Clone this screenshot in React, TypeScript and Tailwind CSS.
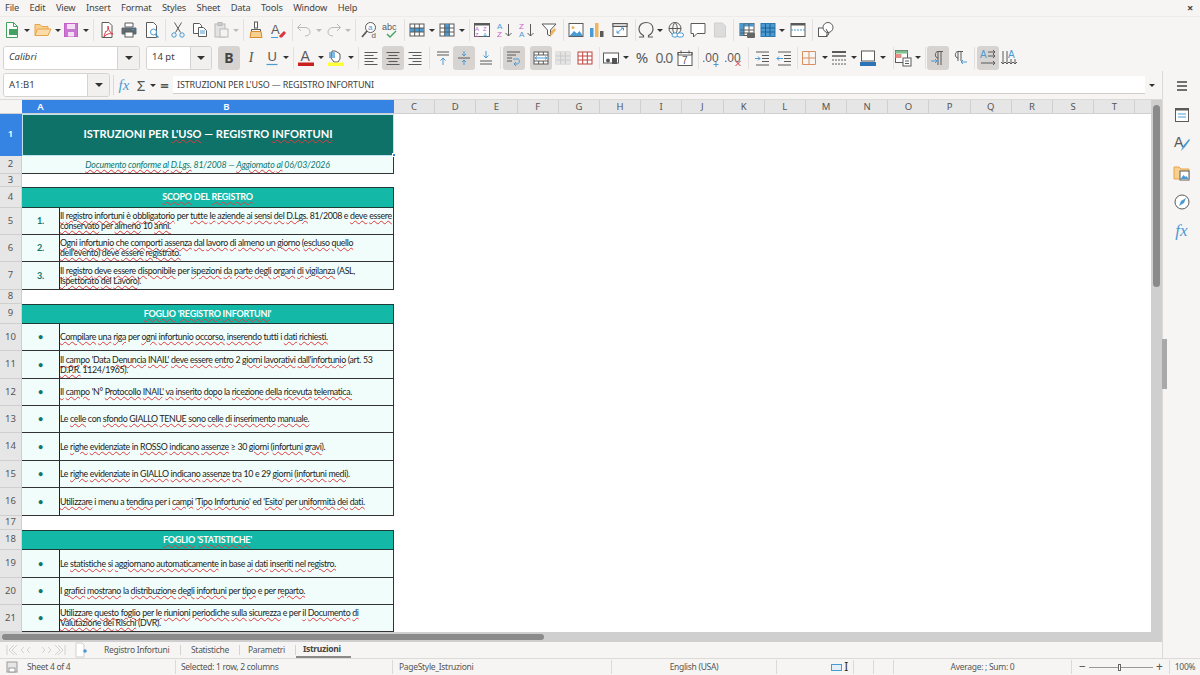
// LibreOffice Calc window, sheet Istruzioni
import type { ReactNode } from "react";

const BLUE = "#4a9bd4";
const GREY = "#5a5a5a";
const LIGHT = "#b9b9b9";
const PINK = "#c65fc9";
const RED = "#d8343a";

const S = ({ children }: { children: ReactNode }) => (
  <svg width="18" height="18" viewBox="0 0 18 18" fill="none" strokeWidth="1" className="shrink-0">
    {children}
  </svg>
);

const B = ({ c, hl, children }: { c: string; hl?: boolean; children?: ReactNode }) => (
  <div
    className={`${c} h-[24px] shrink-0 flex items-center justify-center rounded-[3px] ${hl ? "bg-[#d6d3d0]" : ""}`}
  >
    {children}
  </div>
);

const Arr = ({ c, light }: { c: string; light?: boolean }) => (
  <div className={`${c} h-[24px] shrink-0 flex items-center justify-center`}>
    <div
      className={`w-0 h-0 border-x-[3px] border-x-transparent border-t-[3px] ${light ? "border-t-[#bbbbbb]" : "border-t-[#333333]"}`}
    />
  </div>
);

const Sep = ({ c }: { c: string }) => (
  <div className={`${c} h-[22px] shrink-0 flex justify-center`}>
    <div className="w-px h-full bg-[#e3e1df]" />
  </div>
);

// griglia generica per le icone tabella
const Grid = ({ stroke = GREY, fill }: { stroke?: string; fill?: ReactNode }) => (
  <S>
    <rect x="2" y="3" width="14" height="12" fill="#fff" stroke={stroke} />
    {fill}
    <path d="M2 7h14M2 11h14M6.7 3v12M11.3 3v12" stroke={stroke} />
  </S>
);

const Lines = ({ d, extra }: { d: string; extra?: ReactNode }) => (
  <S>
    <path d={d} stroke={GREY} />
    {extra}
  </S>
);

const Letter = ({ x, y, s, size = 8, color = GREY, italic }: { x: number; y: number; s: string; size?: number; color?: string; italic?: boolean }) => (
  <text x={x} y={y} fontSize={size} fill={color} fontFamily="Liberation Sans, sans-serif" fontStyle={italic ? "italic" : "normal"}>
    {s}
  </text>
);

const IconsRow1 = () => (
  <div className="h-[27px] flex items-center pl-px pb-px">
    <B c="w-[22px]">
      <S>
        <path d="M3.5 1.5h7l4 4v11h-11z" fill="#fff" stroke="#43a260" />
        <rect x="6" y="8" width="9" height="6" fill="#43a260" />
        <path d="M10.5 1.5v4h4" stroke="#43a260" />
      </S>
    </B>
    <Arr c="w-[8px]" />
    <B c="w-[24px]">
      <S>
        <path d="M1 14.5v-11h5l2 2h6v9z" fill="#f7cf8e" stroke="#e9a44b" />
        <path d="M1 14.5l2.5-6.5H17l-3 6.5z" fill="#fbdca9" stroke="#e9a44b" />
      </S>
    </B>
    <Arr c="w-[5px]" />
    <B c="w-[22px]">
      <S>
        <rect x="2.5" y="2.5" width="13" height="13" fill="#c779cf" stroke={PINK} />
        <rect x="5" y="3" width="8" height="5" fill="#f3def5" />
        <rect x="6" y="11" width="6" height="4.5" fill="#f3def5" />
      </S>
    </B>
    <Arr c="w-[8px]" />
    <Sep c="w-[6px]" />
    <B c="w-[22px]">
      <S>
        <path d="M4 1.5h7l3 3v12H4z" fill="#fff" stroke={GREY} />
        <path d="M8 10c2 2 2-5 2-5s0 6 5 8c-3-1-7 0-9 3 0-1 1-4 2-6z" stroke={RED} />
      </S>
    </B>
    <B c="w-[22px]">
      <S>
        <path d="M5 2h8v4H5z" fill="#fff" stroke={GREY} />
        <path d="M2 7h14v6h-3v-2H5v2H2z" fill="#5f6a72" stroke="#5f6a72" />
        <rect x="5" y="11" width="8" height="5" fill="#fff" stroke={GREY} />
        <path d="M12 8.5h2" stroke={BLUE} />
      </S>
    </B>
    <B c="w-[24px]">
      <S>
        <path d="M3.5 1.5h7l3 3v12h-10z" fill="#fff" stroke={GREY} />
        <circle cx="10.5" cy="11" r="3" fill="#fff" stroke={BLUE} />
        <path d="M12.5 13.5l3 3" stroke={BLUE} strokeWidth="1.5" />
      </S>
    </B>
    <Sep c="w-[2px]" />
    <B c="w-[24px]">
      <S>
        <path d="M5.5 1.5l6 10M12.5 1.5l-6 10" stroke={GREY} />
        <circle cx="5" cy="14" r="2.2" stroke={BLUE} />
        <circle cx="13" cy="14" r="2.2" stroke={BLUE} />
      </S>
    </B>
    <B c="w-[20px]">
      <S>
        <path d="M2.5 2.5h6l2 2v8h-8z" fill="#fff" stroke={GREY} />
        <path d="M7.5 6.5h5l3 3v6h-8z" fill="#fff" stroke={GREY} />
        <path d="M9 10h5M9 12h5" stroke={BLUE} />
      </S>
    </B>
    <B c="w-[22px]">
      <S>
        <rect x="3" y="3" width="10" height="13" fill="#e3e3e3" stroke={LIGHT} />
        <rect x="6" y="1.5" width="4" height="3" fill="#ccc" stroke={LIGHT} />
        <rect x="8" y="8" width="8" height="8" fill="#f3f3f3" stroke={LIGHT} />
      </S>
    </B>
    <Arr c="w-[8px]" light />
    <Sep c="w-[6px]" />
    <B c="w-[20px]">
      <S>
        <rect x="7.5" y="1" width="3" height="6" fill="#fff" stroke={GREY} />
        <path d="M4.5 8.5h9v2h-9z" fill="#fff" stroke={GREY} />
        <path d="M4 10.5h10l1 6H3z" fill="#f7cf8e" stroke="#d98d2a" />
      </S>
    </B>
    <B c="w-[24px]">
      <S>
        <Letter x={2} y={13} s="A" size={13} color={GREY} />
        <path d="M10 15l5-5 2 2-4 4.500h-2z" fill={RED} />
        <path d="M2 16.500h7" stroke={BLUE} />
      </S>
    </B>
    <Sep c="w-[4px]" />
    <B c="w-[20px]">
      <S>
        <path d="M6 3L2.500 6.500 6 10M3 6.500h7c3 0 5 2 5 4.500s-2 4-5 4" stroke={LIGHT} />
      </S>
    </B>
    <Arr c="w-[10px]" light />
    <B c="w-[20px]">
      <S>
        <path d="M12 3l3.500 3.500L12 10M15 6.500H8c-3 0-5 2-5 4.500s2 4 5 4" stroke={LIGHT} />
      </S>
    </B>
    <Arr c="w-[8px]" light />
    <Sep c="w-[6px]" />
    <B c="w-[22px]">
      <S>
        <circle cx="10.500" cy="6.500" r="5" fill="#fff" stroke={GREY} />
        <path d="M7 10l-5 6" stroke={GREY} strokeWidth="1.800" />
        <Letter x={8} y={9} s="a" size={8} color={BLUE} />
        <Letter x={11.500} y={17} s="d" size={8} color={GREY} />
      </S>
    </B>
    <B c="w-[22px]">
      <S>
        <Letter x={0} y={9} s="abc" size={9} color={GREY} />
        <path d="M5 13l3 3 6-6" stroke="#43a260" strokeWidth="1.400" />
      </S>
    </B>
    <Sep c="w-[4px]" />
    <B c="w-[22px]">
      <Grid fill={<rect x="2" y="7" width="14" height="4" fill={BLUE} />} />
    </B>
    <Arr c="w-[8px]" />
    <B c="w-[22px]">
      <Grid fill={<rect x="6.700" y="3" width="4.600" height="12" fill={BLUE} />} />
    </B>
    <Arr c="w-[8px]" />
    <Sep c="w-[6px]" />
    <B c="w-[20px]">
      <S>
        <rect x="1.500" y="2.500" width="15" height="13" fill="#fff" stroke={GREY} />
        <rect x="1.500" y="2.500" width="15" height="2" fill={GREY} />
        <Letter x={2} y={10} s="A" size={6} color={PINK} />
        <Letter x={10} y={10} s="Z" size={6} color={PINK} />
        <Letter x={2} y={15.500} s="Z" size={6} color={PINK} />
        <Letter x={10} y={15.500} s="A" size={6} color={BLUE} />
      </S>
    </B>
    <B c="w-[26px]">
      <S>
        <Letter x={1} y={8} s="A" size={8} color={BLUE} />
        <Letter x={1} y={16} s="Z" size={8} color={PINK} />
        <path d="M12.500 3v12M9.500 12l3 3 3-3" stroke={GREY} />
      </S>
    </B>
    <B c="w-[18px]">
      <S>
        <Letter x={1} y={8} s="Z" size={8} color={PINK} />
        <Letter x={1} y={16} s="A" size={8} color={BLUE} />
        <path d="M12.500 3v12M9.500 12l3 3 3-3" stroke={GREY} />
      </S>
    </B>
    <B c="w-[26px]">
      <S>
        <path d="M2 3h14l-5.500 6v6l-3-1.500V9z" fill="#fff" stroke={GREY} />
        <path d="M11 10l4-3 1 2-4 5-2 1z" fill="#f1b45f" />
      </S>
    </B>
    <Sep c="w-[2px]" />
    <B c="w-[24px]">
      <S>
        <rect x="2" y="2.500" width="14" height="13" fill="#fff" stroke={GREY} />
        <circle cx="6" cy="6.500" r="1.500" fill="#f1b45f" />
        <path d="M2.500 15l4.500-5 3 2.500 2.500-2.500 3.500 5z" fill={BLUE} />
      </S>
    </B>
    <B c="w-[18px]">
      <S>
        <rect x="2" y="7" width="3.500" height="9" fill={BLUE} />
        <rect x="7" y="2" width="3.500" height="14" fill="#f1b45f" />
        <rect x="12" y="10" width="3.500" height="6" fill={GREY} />
      </S>
    </B>
    <B c="w-[28px]">
      <S>
        <rect x="2" y="2.500" width="14" height="13" fill="#fff" stroke={GREY} />
        <rect x="2" y="2.500" width="14" height="3" fill="#d5d5d5" stroke={GREY} />
        <path d="M6 12l6-5M10 7h2.500v2.500M6 9.500V12h2.500" stroke={BLUE} />
      </S>
    </B>
    <Sep c="w-[2px]" />
    <B c="w-[20px]">
      <S>
        <path d="M2 16h4.500v-1.500C3.500 13 2 11 2 8c0-4 3-6.500 7-6.500S16 4 16 8c0 3-1.500 5-4.500 6.500V16H16" stroke={GREY} strokeWidth="1.200" />
      </S>
    </B>
    <Arr c="w-[8px]" />
    <B c="w-[24px]">
      <S>
        <circle cx="8" cy="7.500" r="6" stroke={GREY} />
        <path d="M2 7.500h12M8 1.500c-3 3-3 9 0 12M8 1.500c3 3 3 9 0 12" stroke={GREY} />
        <rect x="5" y="12" width="6" height="4" rx="2" fill="#fff" stroke={BLUE} />
        <rect x="10" y="12" width="6.500" height="4" rx="2" fill="#fff" stroke={BLUE} />
      </S>
    </B>
    <B c="w-[20px]">
      <S>
        <path d="M2 2.500h14v10H8l-3.500 3.500v-3.500H2z" fill="#fff" stroke={GREY} />
      </S>
    </B>
    <B c="w-[24px]">
      <S>
        <path d="M3.500 2h8l3 3v11h-11z" fill="#dcdcdc" stroke="#cfcfcf" />
      </S>
    </B>
    <Sep c="w-[2px]" />
    <B c="w-[26px]">
      <S>
        <rect x="2" y="2.500" width="14" height="12" fill="#fff" stroke={GREY} />
        <rect x="2" y="2.500" width="14" height="3" fill={BLUE} />
        <rect x="2" y="2.500" width="4" height="12" fill={BLUE} />
        <path d="M2 9h14M2 12h14M6 3v12M11 3v12" stroke={GREY} />
        <rect x="9" y="12" width="8" height="5" rx="1" fill="#666" />
      </S>
    </B>
    <B c="w-[16px]">
      <S>
        <rect x="2" y="2.500" width="14" height="13" fill={BLUE} stroke="#2f78ad" />
        <path d="M2 7h14M2 11h14M6.500 3v12M11 3v12" stroke="#1f5f8f" />
      </S>
    </B>
    <Arr c="w-[12px]" />
    <B c="w-[20px]">
      <S>
        <rect x="2" y="2.500" width="14" height="13" fill="#fff" stroke={GREY} />
        <rect x="2" y="2.500" width="14" height="2" fill={GREY} />
        <path d="M2 9h14" stroke={BLUE} strokeDasharray="2 1" />
      </S>
    </B>
    <Sep c="w-[8px]" />
    <B c="w-[20px]">
      <S>
        <rect x="1.500" y="7" width="8.500" height="8.500" fill="#fff" stroke={GREY} />
        <circle cx="11" cy="6.500" r="5" fill="#fff" stroke={GREY} />
        <path d="M9 8l3 5-3 2" stroke={GREY} />
      </S>
    </B>
  </div>
);

const Combo = ({ box, input, italic, text }: { box: string; input: string; italic?: boolean; text: string }) => (
  <div className={`${box} h-[24px] shrink-0 flex rounded-[3px] border border-[#d5d3d0] bg-[#f6f5f4] overflow-hidden`}>
    <div className={`${input} bg-white flex items-center pl-[5px] text-[9.500px] text-[#3d3d3d] ${italic ? "italic" : ""}`}>
      {text}
    </div>
    <div className="flex-1 flex items-center justify-center border-l border-[#d5d3d0] bg-[#f1f0ee]">
      <div className="w-0 h-0 border-x-[4px] border-x-transparent border-t-[4px] border-t-[#333333]" />
    </div>
  </div>
);

const IconsRow2 = () => (
  <div className="h-[27px] flex items-center pl-[3px]">
    <Combo box="w-[137px]" input="w-[113px]" italic text="Calibri" />
    <Combo box="w-[66px] ml-[6px]" input="w-[43px]" text="14 pt" />
    <B c="w-[22px] ml-[6px]" hl>
      <span className="text-[14px] font-bold text-[#444444]">B</span>
    </B>
    <B c="w-[22px]">
      <span className="text-[14px] italic text-[#555555] font-['Liberation_Serif',serif]">I</span>
    </B>
    <B c="w-[20px]">
      <S>
        <Letter x={4.500} y={12} s="U" size={13} color={GREY} />
        <path d="M3.500 15.500h11" stroke={BLUE} strokeWidth="1.200" />
      </S>
    </B>
    <Arr c="w-[8px]" />
    <Sep c="w-[6px]" />
    <B c="w-[20px]">
      <S>
        <Letter x={3.500} y={12} s="A" size={14} color={GREY} />
        <rect x="1" y="13.500" width="16" height="3.500" fill="#c9211e" />
      </S>
    </B>
    <Arr c="w-[10px]" />
    <B c="w-[20px]">
      <S>
        <path d="M5 2h3l2 1 3 2v5l-2 3H7l-3-4z" fill="#fff" stroke={GREY} />
        <rect x="2" y="3" width="6" height="6" fill={BLUE} opacity=".7" />
        <rect x="1" y="13.500" width="16" height="3.500" fill="#ffff38" />
      </S>
    </B>
    <Arr c="w-[10px]" />
    <Sep c="w-[4px]" />
    <B c="w-[22px]">
      <Lines d="M2.500 3.500h13M2.500 6.500h9M2.500 9.500h13M2.500 12.500h9M2.500 15.500h13" />
    </B>
    <B c="w-[22px]" hl>
      <Lines d="M2.500 3.500h13M4.500 6.500h9M2.500 9.500h13M4.500 12.500h9M2.500 15.500h13" />
    </B>
    <B c="w-[22px]">
      <Lines d="M2.500 3.500h13M6.500 6.500h9M2.500 9.500h13M6.500 12.500h9M2.500 15.500h13" />
    </B>
    <Sep c="w-[6px]" />
    <B c="w-[21px]">
      <Lines d="M3 3h12M3 6h12" extra={<path d="M9 16V9M6.500 11.500L9 9l2.500 2.500" stroke={BLUE} />} />
    </B>
    <B c="w-[22px]" hl>
      <Lines d="M3 9h12" extra={<path d="M9 2v5M7 5l2 2 2-2M9 16v-5M7 13l2-2 2 2" stroke={BLUE} />} />
    </B>
    <B c="w-[22px]">
      <Lines d="M3 12h12M3 15h12" extra={<path d="M9 2v7M6.500 6.500L9 9l2.500-2.500" stroke={BLUE} />} />
    </B>
    <Sep c="w-[6px]" />
    <B c="w-[22px]" hl>
      <Lines d="M2 3h13M2 6h9M2 9h5M2 12h5" extra={<path d="M8 10h5c2 0 2 5-1 5H9M11 13l-2 2 2 2" stroke={BLUE} />} />
    </B>
    <B c="w-[22px] ml-[5px]" hl>
      <S>
        <rect x="2" y="3" width="14" height="12" fill="#fff" stroke={GREY} />
        <path d="M2 6h14M2 12h14M6.700 3v3M11.300 3v3M6.700 12v3M11.300 12v3" stroke={GREY} />
        <path d="M3 9h12M3 9l2-1.500M3 9l2 1.500M15 9l-2-1.500M15 9l-2 1.500" stroke={BLUE} />
      </S>
    </B>
    <B c="w-[22px]">
      <Grid stroke="#c9c9c9" fill={<rect x="2" y="3" width="14" height="12" fill="#e4e4e4" />} />
    </B>
    <B c="w-[22px]">
      <Grid stroke="#c0443f" />
    </B>
    <Sep c="w-[6px]" />
    <B c="w-[18px]">
      <S>
        <rect x="1.500" y="4" width="15" height="10" fill="#fff" stroke={GREY} />
        <circle cx="6" cy="11.500" r="2" fill="#555" />
        <rect x="10" y="9" width="5" height="6" fill="#555" />
      </S>
    </B>
    <Arr c="w-[12px]" />
    <B c="w-[20px]">
      <span className="text-[15px] text-[#555555]">%</span>
    </B>
    <B c="w-[24px]">
      <span className="text-[14px] text-[#666666] tracking-[-1px]">0.0</span>
    </B>
    <B c="w-[18px]">
      <S>
        <rect x="2" y="3.500" width="14" height="13" fill="#fff" stroke={GREY} />
        <path d="M2 3.500h14v2.500H2zM5 1.500v3M13 1.500v3" stroke={GREY} />
        <Letter x={6} y={15} s="7" size={10} color={GREY} />
      </S>
    </B>
    <Sep c="w-[8px]" />
    <B c="w-[20px]">
      <S>
        <Letter x={-1} y={13} s=".00" size={12} color={GREY} />
        <path d="M13 13v5M10.500 15.500h5" stroke={BLUE} />
      </S>
    </B>
    <B c="w-[24px]">
      <S>
        <Letter x={-1} y={13} s=".00" size={12} color={GREY} />
        <path d="M10.500 12l5 5M15.500 12l-5 5" stroke={RED} />
      </S>
    </B>
    <Sep c="w-[4px]" />
    <B c="w-[24px]">
      <Lines d="M3 3h13M9 6.500h7M9 9.500h7M9 12.500h7M3 16h13" extra={<path d="M2 9.500h5M5 7.500l2 2-2 2" stroke={BLUE} />} />
    </B>
    <B c="w-[20px]">
      <Lines d="M3 3h13M9 6.500h7M9 9.500h7M9 12.500h7M3 16h13" extra={<path d="M8 9.500H2M4 7.500l-2 2 2 2" stroke={BLUE} />} />
    </B>
    <Sep c="w-[6px]" />
    <B c="w-[18px]">
      <S>
        <path d="M2.500 2.500h13v13h-13zM9 2.500v13M2.500 9h13" stroke="#d98f5f" />
      </S>
    </B>
    <Arr c="w-[14px]" />
    <B c="w-[14px]">
      <S>
        <path d="M2 3h14" stroke={GREY} strokeWidth="2" />
        <path d="M2 7h14" stroke={GREY} strokeWidth="1.500" />
        <path d="M2 11h14M2 15h14" stroke={GREY} strokeDasharray="2 1" />
      </S>
    </B>
    <Arr c="w-[16px]" />
    <B c="w-[12px]">
      <S>
        <rect x="2.500" y="2" width="13" height="10" fill="#fff" stroke={GREY} />
        <rect x="1" y="13" width="16" height="4" fill="#2b74b8" />
      </S>
    </B>
    <Arr c="w-[18px]" />
    <Sep c="w-[2px]" />
    <B c="w-[18px]">
      <S>
        <rect x="1.500" y="1.500" width="12" height="12" fill="#fff" stroke={GREY} />
        <rect x="1.500" y="1.500" width="12" height="3" fill="#7cc08f" />
        <rect x="1.500" y="5" width="6" height="4" fill="#e88c84" />
        <rect x="9" y="9" width="8" height="8" fill="#fff" stroke={GREY} />
        <path d="M11 12h4M11 14.500h4" stroke={GREY} />
      </S>
    </B>
    <Arr c="w-[12px]" />
    <Sep c="w-[3px]" />
    <B c="w-[22px]" hl>
      <Lines d="M9 16V2.500h5M12 2.500V16M9 2.500C5.500 2.500 5.500 9 9 9" extra={<path d="M2 12h6M6 10l2 2-2 2" stroke={BLUE} />} />
    </B>
    <B c="w-[22px]">
      <Lines d="M7 12V2.500h5M10 2.500V12M7 2.500C3.500 2.500 3.500 9 7 9" extra={<path d="M16 13h-6M12 11l-2 2 2 2" stroke={BLUE} />} />
    </B>
    <Sep c="w-[6px]" />
    <B c="w-[22px]" hl>
      <S>
        <Letter x={1} y={9} s="A" size={10} color={BLUE} />
        <path d="M9 3h7M14 1l2 2-2 2M9 7h7M14 5l2 2-2 2M2 14h14M14 12l2 2-2 2" stroke={GREY} />
      </S>
    </B>
    <B c="w-[20px]">
      <S>
        <Letter x={8} y={9} s="A" size={10} color={BLUE} />
        <path d="M3 2v13M1 13l2 2 2-2M7 2v13M5 13l2 2 2-2M11 10v5M9 13l2 2 2-2M15 10v5M13 13l2 2 2-2" stroke={GREY} />
      </S>
    </B>
  </div>
);

const FormulaBar = () => (
  <div className="h-[29px] flex items-center pl-[3px] border-b border-[#dcdad7]">
    <Combo box="w-[107px]" input="w-[83px]" text="A1:B1" />
    <div className="w-px h-[20px] bg-[#dcdad7] ml-[3px]" />
    <div className="w-[20px] text-center text-[15px] italic text-[#4a9bd4] font-['Liberation_Serif',serif]">fx</div>
    <div className="w-[14px] text-center text-[15px] text-[#555555]">Σ</div>
    <Arr c="w-[9px]" />
    <div className="w-[15px] text-center text-[15px] font-bold text-[#555555]">=</div>
    <div className="w-[972px] ml-px h-[18px] bg-white border-b border-[#cfcdca] flex items-center pl-[4px] text-[9px] tracking-[-0.15px] text-[#3d3d3d] whitespace-nowrap">
      ISTRUZIONI PER L'USO — REGISTRO INFORTUNI
    </div>
    <Arr c="w-[14px]" />
  </div>
);

const letters = ["C", "D", "E", "F", "G", "H", "I", "J", "K", "L", "M", "N", "O", "P", "Q", "R", "S", "T"];

const ColHeaders = () => (
  <div className="h-[14px] flex text-[9.500px] leading-[13px] text-[#555555] bg-[#e6e6e6] border-b border-[#d0d0d0]">
    <div className="w-[22px] shrink-0 bg-[#f6f5f4]" />
    <div className="w-[37px] shrink-0 bg-[#3584e4] text-white font-semibold text-center">A</div>
    <div className="w-[335px] shrink-0 bg-[#3584e4] text-white font-semibold text-center">B</div>
    {letters.map((l) => (
      <div key={l} className="w-[41.200px] shrink-0 text-center border-r border-[#cfcfcf]">
        {l}
      </div>
    ))}
  </div>
);

// ~parola~ = parola con sottolineatura rossa del correttore
const Spell = ({ text }: { text: string }) => (
  <>
    {text.split("~").map((part, i) =>
      i % 2 ? (
        <span key={i} className="underline decoration-wavy decoration-[#e0393e] decoration-1 underline-offset-[1px]">
          {part}
        </span>
      ) : (
        part
      ),
    )}
  </>
);

const RowHead = ({ n, h, active }: { n: number; h: string; active?: boolean }) => (
  <div
    className={`w-[22px] shrink-0 ${h} flex items-center justify-center text-[9.500px] border-b border-r ${
      active ? "bg-[#3584e4] text-white font-semibold border-[#3584e4]" : "bg-[#e6e6e6] text-[#555555] border-[#cfcfcf]"
    }`}
  >
    {n}
  </div>
);

const BodyRow = ({ n, h, mark, bullet, text }: { n: number; h: string; mark: string; bullet?: boolean; text: string }) => (
  <div className="flex">
    <RowHead n={n} h={h} />
    <div className={`w-[372px] shrink-0 ${h} flex bg-[#f0fdfa] border-b border-r border-[#333333] font-['Lato',sans-serif]`}>
      <div className={`w-[38px] shrink-0 flex items-center justify-center border-r border-[#222222] text-[#0f766e] font-bold text-[9px] ${bullet ? "" : "tracking-[-0.2px]"}`}>
        {mark}
      </div>
      <div className="flex-1 flex items-center text-[8.800px] tracking-[-0.34px] leading-[10px] text-[#222222] whitespace-pre overflow-hidden">
        <div>
          <Spell text={text} />
        </div>
      </div>
    </div>
  </div>
);

const SectionRow = ({ n, h, text }: { n: number; h: string; text: string }) => (
  <div className="flex">
    <RowHead n={n} h={h} />
    <div className={`w-[372px] shrink-0 ${h} flex items-center justify-center pb-px bg-[#14b8a6] border-y border-r border-[#1f3b38] text-white font-bold text-[9px] tracking-[-0.25px] font-['Lato',sans-serif]`}>
      <span>
        <Spell text={text} />
      </span>
    </div>
  </div>
);

const EmptyRow = ({ n, h }: { n: number; h: string }) => (
  <div className="flex">
    <RowHead n={n} h={h} />
  </div>
);

const Sheet = () => (
  <div className="h-[518px] overflow-hidden bg-white">
    <div className="flex relative">
      <RowHead n={1} h="h-[42px]" active />
      <div className="w-[372px] shrink-0 h-[42px] flex items-center justify-center pb-[2px] bg-[#0f7268] border border-[#bfe3ef] text-white font-bold text-[11.100px] font-['Lato',sans-serif]">
        <span>
          <Spell text="ISTRUZIONI PER ~L'USO~ — REGISTRO ~INFORTUNI~" />
        </span>
      </div>
      <div className="absolute left-[392px] top-[39px] w-[4px] h-[4px] bg-[#3584e4] border border-white" />
    </div>
    <div className="flex">
      <RowHead n={2} h="h-[18px]" />
      <div className="w-[372px] shrink-0 h-[18px] flex items-center justify-center bg-[#f0fdfa] border-b border-r border-[#333333] italic text-[#0f766e] text-[8.800px] tracking-[-0.2px] font-['Lato',sans-serif]">
        <span>
          <Spell text="~Documento~ ~conforme~ ~al~ ~D.Lgs.~ 81/2008 — ~Aggiornato~ ~al~ 06/03/2026" />
        </span>
      </div>
    </div>
    <EmptyRow n={3} h="h-[13px]" />
    <SectionRow n={4} h="h-[21px]" text="~SCOPO~ DEL ~REGISTRO~" />
    <BodyRow n={5} h="h-[27px]" mark="1." text={"~Il~ ~registro~ ~infortuni~ è ~obbligatorio~ per ~tutte~ ~le~ ~aziende~ ~ai~ ~sensi~ ~del~ ~D.Lgs.~ 81/2008 e ~deve~ ~essere~\n~conservato~ per ~almeno~ 10 ~anni.~"} />
    <BodyRow n={6} h="h-[27px]" mark="2." text={"~Ogni~ ~infortunio~ ~che~ ~comporti~ ~assenza~ ~dal~ ~lavoro~ ~di~ ~almeno~ ~un~ ~giorno~ (~escluso~ ~quello~\n~dell'evento~) ~deve~ ~essere~ ~registrato.~"} />
    <BodyRow n={7} h="h-[28px]" mark="3." text={"~Il~ ~registro~ ~deve~ ~essere~ ~disponibile~ per ~ispezioni~ ~da~ ~parte~ ~degli~ ~organi~ ~di~ ~vigilanza~ (ASL,\n~Ispettorato~ ~del~ ~Lavoro~)."} />
    <EmptyRow n={8} h="h-[14px]" />
    <SectionRow n={9} h="h-[20px]" text="~FOGLIO~ '~REGISTRO~ ~INFORTUNI~'" />
    <BodyRow n={10} h="h-[27px]" mark="•" bullet text="~Compilare~ ~una~ ~riga~ per ~ogni~ ~infortunio~ ~occorso,~ ~inserendo~ tutti i ~dati~ ~richiesti.~" />
    <BodyRow n={11} h="h-[28px]" mark="•" bullet text={"~Il~ ~campo~ 'Data ~Denuncia~ ~INAIL~' ~deve~ ~essere~ ~entro~ 2 ~giorni~ ~lavorativi~ ~dall'infortunio~ (art. 53\n~D.P.R.~ 1124/1965)."} />
    <BodyRow n={12} h="h-[27px]" mark="•" bullet text="~Il~ ~campo~ 'N° ~Protocollo~ ~INAIL~' ~va~ ~inserito~ ~dopo~ la ~ricezione~ ~della~ ~ricevuta~ ~telematica.~" />
    <BodyRow n={13} h="h-[27px]" mark="•" bullet text="Le ~celle~ con ~sfondo~ ~GIALLO~ ~TENUE~ ~sono~ ~celle~ ~di~ ~inserimento~ ~manuale.~" />
    <BodyRow n={14} h="h-[28px]" mark="•" bullet text="Le ~righe~ ~evidenziate~ in ~ROSSO~ ~indicano~ ~assenze~ ≥ 30 ~giorni~ (~infortuni~ ~gravi~)." />
    <BodyRow n={15} h="h-[27px]" mark="•" bullet text="Le ~righe~ ~evidenziate~ in ~GIALLO~ ~indicano~ ~assenze~ ~tra~ 10 e 29 ~giorni~ (~infortuni~ ~medi~)." />
    <BodyRow n={16} h="h-[28px]" mark="•" bullet text="~Utilizzare~ i menu a ~tendina~ per i ~campi~ '~Tipo~ ~Infortunio~' ed '~Esito~' per ~uniformità~ ~dei~ ~dati.~" />
    <EmptyRow n={17} h="h-[14px]" />
    <SectionRow n={18} h="h-[20px]" text="~FOGLIO~ '~STATISTICHE~'" />
    <BodyRow n={19} h="h-[28px]" mark="•" bullet text="Le ~statistiche~ ~si~ ~aggiornano~ ~automaticamente~ in base ~ai~ ~dati~ ~inseriti~ ~nel~ ~registro.~" />
    <BodyRow n={20} h="h-[27px]" mark="•" bullet text="I ~grafici~ ~mostrano~ la ~distribuzione~ ~degli~ ~infortuni~ per ~tipo~ e per ~reparto.~" />
    <BodyRow n={21} h="h-[27px]" mark="•" bullet text={"~Utilizzare~ ~questo~ ~foglio~ per ~le~ ~riunioni~ ~periodiche~ ~sulla~ ~sicurezza~ e per ~il~ ~Documento~ ~di~\n~Valutazione~ ~dei~ ~Rischi~ (DVR)."} />
  </div>
);

const SideIcons = () => (
  <div className="w-[38px] shrink-0 flex flex-col items-center border-l border-[#dcdad7] relative">
    <div className="h-[29px] flex items-center">
      <svg width="14" height="14" viewBox="0 0 14 14">
        <path d="M2 3h10M2 7h10M2 11h10" stroke="#444" strokeWidth="1.500" />
      </svg>
    </div>
    <div className="mt-[6px] flex flex-col items-center gap-[11px]">
      <S>
        <rect x="2.500" y="2.500" width="13" height="13" fill="#fff" stroke={GREY} />
        <rect x="2.500" y="2.500" width="13" height="2" fill={GREY} />
        <path d="M5 8h8M5 11h8" stroke={BLUE} />
      </S>
      <S>
        <Letter x={1} y={12} s="A" size={14} color={GREY} />
        <path d="M8 16l2-5 6-7 1 1-5 7z" fill={BLUE} />
      </S>
      <S>
        <path d="M1 15V3h5l2 2h8v10z" fill="#f7cf8e" stroke="#e9a44b" />
        <rect x="7" y="7" width="9" height="9" fill="#fff" stroke={GREY} />
        <path d="M7.500 15l3-4 2 2 1-1 2 3z" fill={BLUE} />
      </S>
      <S>
        <circle cx="9" cy="9" r="7" fill="#fff" stroke={GREY} />
        <path d="M13 5l-2 5-5 3 2-5z" fill={BLUE} />
      </S>
      <div className="text-[17px] leading-[18px] italic text-[#4a9bd4] font-['Liberation_Serif',serif]">fx</div>
    </div>
    <div className="absolute -left-px top-[268px] w-[5px] h-[50px] bg-[#a9a9a9]" />
  </div>
);

const TabBar = () => (
  <div className="h-[16px] flex items-center text-[8.500px] tracking-[-0.3px] text-[#555555] whitespace-nowrap">
    <div className="w-[68px] pl-[6px] flex items-center">
      <svg width="60" height="12" viewBox="0 0 60 12" fill="none" stroke="#d2d2d2">
        <path d="M1 1v10M8 1L3 6l5 5M11 1L6 6l5 5M18 3l-3 3 3 3M24 3l-3 3 3 3M36 3l3 3-3 3M42 3l3 3-3 3M49 1l5 5-5 5M52 1l5 5-5 5M59 1v10" />
      </svg>
    </div>
    <div className="w-[30px] pl-[7px] flex items-center">
      <svg width="14" height="16" viewBox="0 0 14 16">
        <path d="M1 1h6l2 2v12H1z" fill="#fff" stroke="#cfcfcf" />
        <circle cx="10" cy="9" r="1.800" fill="#4a9bd4" />
      </svg>
    </div>
    <div className="w-[82px] pl-[6px]">Registro Infortuni</div>
    <div className="w-px h-[10px] bg-[#d5d3d0]" />
    <div className="w-[58px] pl-[10px]">Statistiche</div>
    <div className="w-px h-[10px] bg-[#d5d3d0]" />
    <div className="w-[55px] pl-[8px]">Parametri</div>
    <div className="w-px h-[10px] bg-[#d5d3d0]" />
    <div className="w-[55px] h-[16px] pl-[7px] flex items-center font-bold text-[#444444] border-b-2 border-[#8a8a8a]">Istruzioni</div>
  </div>
);

const StatusSep = () => <div className="w-px h-[14px] shrink-0 bg-[#dcdad7]" />;

const StatusBar = () => (
  <div className="h-[17px] flex items-center border-t border-[#dcdad7] text-[8.500px] tracking-[-0.3px] text-[#555555] whitespace-nowrap">
    <div className="w-[27px] shrink-0 pl-[6px]">
      <svg width="12" height="12" viewBox="0 0 12 12">
        <rect x="1" y="1" width="10" height="10" fill="#e6e6e6" stroke="#999" />
        <rect x="3" y="7" width="6" height="4" fill="#fff" stroke="#999" />
      </svg>
    </div>
    <div className="w-[148px] shrink-0">Sheet 4 of 4</div>
    <StatusSep />
    <div className="w-[216px] shrink-0 pl-[5px]">Selected: 1 row, 2 columns</div>
    <StatusSep />
    <div className="w-[218px] shrink-0 pl-[6px]">PageStyle_Istruzioni</div>
    <StatusSep />
    <div className="w-[164px] shrink-0 text-center">English (USA)</div>
    <StatusSep />
    <div className="w-[76px] shrink-0 flex items-center justify-end gap-[2px] pr-[5px]">
      <div className="w-[11px] h-[7px] border border-[#4a9bd4] bg-[#e3f0f9]" />
      <div className="text-[12px] leading-[12px] text-[#333333]">I</div>
    </div>
    <StatusSep />
    <div className="w-[19px] shrink-0" />
    <StatusSep />
    <div className="w-[19px] shrink-0" />
    <StatusSep />
    <div className="w-[177px] shrink-0 text-center">Average: ; Sum: 0</div>
    <StatusSep />
    <div className="w-[97px] shrink-0 flex items-center pl-[7px]">
      <span className="text-[12px] leading-[12px] w-[10px]">−</span>
      <div className="w-[64px] h-px bg-[#999999] relative">
        <div className="absolute left-[29px] -top-[3px] w-[3px] h-[7px] border border-[#666666] bg-white" />
      </div>
      <span className="text-[12px] leading-[12px] ml-[3px]">+</span>
    </div>
    <StatusSep />
    <div className="flex-1 text-center">100%</div>
  </div>
);

export default function App() {
  return (
    <div className="w-[1200px] h-[675px] overflow-hidden flex flex-col bg-[#f6f5f4] text-[#3d3d3d] font-['Noto_Sans',sans-serif]">
      {/* menu */}
      <div className="h-[17px] shrink-0 flex items-center text-[9.300px] tracking-[-0.2px] text-[#444444] border-b border-[#ecebe9]">
        <div className="flex gap-[10.500px] pl-[5px] -mt-px">
          {["File", "Edit", "View", "Insert", "Format", "Styles", "Sheet", "Data", "Tools", "Window", "Help"].map((m) => (
            <span key={m}>{m}</span>
          ))}
        </div>
        <span className="ml-auto mr-[7px] text-[11px] font-bold">×</span>
      </div>
      <IconsRow1 />
      <IconsRow2 />
      <div className="flex flex-1 min-h-0">
        <div className="w-[1162px] shrink-0 flex flex-col min-w-0">
          <FormulaBar />
          <div className="flex">
            <div className="w-[1151px] shrink-0 overflow-hidden">
              <ColHeaders />
              <Sheet />
            </div>
            <div className="w-[11px] shrink-0 bg-[#cfcfcf] pt-[5px] px-[2px]">
              <div className="h-[182px] rounded-full bg-[#8a8a8a]" />
            </div>
          </div>
          <div className="h-[10px] bg-[#cfcfcf] flex items-center pl-[2px]">
            <div className="w-[542px] h-[6px] rounded-full bg-[#8a8a8a]" />
          </div>
          <TabBar />
        </div>
        <SideIcons />
      </div>
      <StatusBar />
    </div>
  );
}
